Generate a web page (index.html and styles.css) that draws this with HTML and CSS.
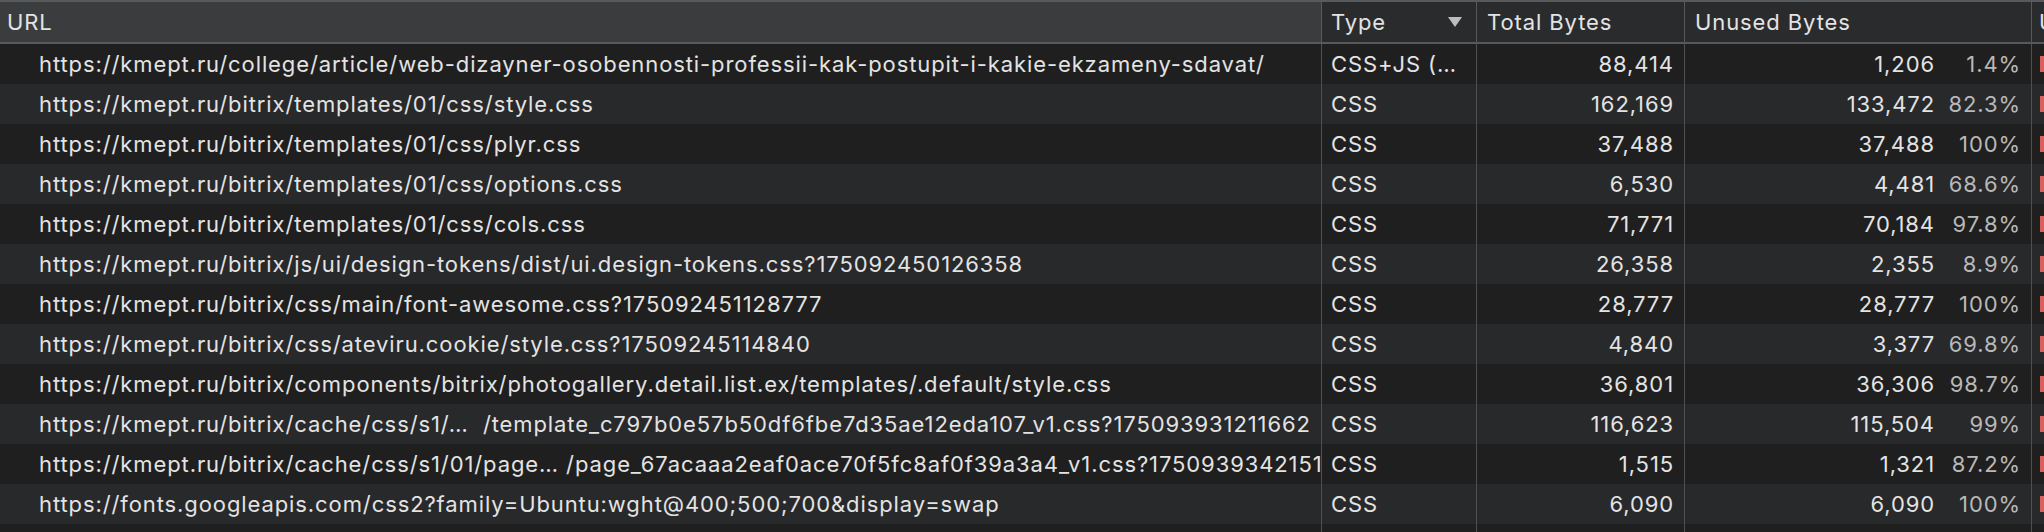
FILE: index.html
```html
<!DOCTYPE html>
<html>
<head>
<meta charset="utf-8">
<link rel="stylesheet" href="styles.css">
</head>
<body>
<div class="grid">
  <div class="row head">
    <div class="cell url sorted">URL</div>
    <div class="cell type">Type<span class="arrow"></span></div>
    <div class="cell">Total Bytes</div>
    <div class="cell">Unused Bytes</div>
    <div class="cell last">U</div>
  </div>
  <div class="row"><div class="cell url">https://kmept.ru/college/article/web-dizayner-osobennosti-professii-kak-postupit-i-kakie-ekzameny-sdavat/</div><div class="cell type">CSS+JS (…</div><div class="cell num">88,414</div><div class="cell unused"><span>1,206</span><span class="pct">1.4%</span></div><div class="cell last"><span class="bar"></span></div></div>
  <div class="row"><div class="cell url">https://kmept.ru/bitrix/templates/01/css/style.css</div><div class="cell type">CSS</div><div class="cell num">162,169</div><div class="cell unused"><span>133,472</span><span class="pct">82.3%</span></div><div class="cell last"><span class="bar"></span></div></div>
  <div class="row"><div class="cell url">https://kmept.ru/bitrix/templates/01/css/plyr.css</div><div class="cell type">CSS</div><div class="cell num">37,488</div><div class="cell unused"><span>37,488</span><span class="pct">100%</span></div><div class="cell last"><span class="bar"></span></div></div>
  <div class="row"><div class="cell url">https://kmept.ru/bitrix/templates/01/css/options.css</div><div class="cell type">CSS</div><div class="cell num">6,530</div><div class="cell unused"><span>4,481</span><span class="pct">68.6%</span></div><div class="cell last"><span class="bar"></span></div></div>
  <div class="row"><div class="cell url">https://kmept.ru/bitrix/templates/01/css/cols.css</div><div class="cell type">CSS</div><div class="cell num">71,771</div><div class="cell unused"><span>70,184</span><span class="pct">97.8%</span></div><div class="cell last"><span class="bar"></span></div></div>
  <div class="row"><div class="cell url">https://kmept.ru/bitrix/js/ui/design-tokens/dist/ui.design-tokens.css?175092450126358</div><div class="cell type">CSS</div><div class="cell num">26,358</div><div class="cell unused"><span>2,355</span><span class="pct">8.9%</span></div><div class="cell last"><span class="bar"></span></div></div>
  <div class="row"><div class="cell url">https://kmept.ru/bitrix/css/main/font-awesome.css?175092451128777</div><div class="cell type">CSS</div><div class="cell num">28,777</div><div class="cell unused"><span>28,777</span><span class="pct">100%</span></div><div class="cell last"><span class="bar"></span></div></div>
  <div class="row"><div class="cell url">https://kmept.ru/bitrix/css/ateviru.cookie/style.css?17509245114840</div><div class="cell type">CSS</div><div class="cell num">4,840</div><div class="cell unused"><span>3,377</span><span class="pct">69.8%</span></div><div class="cell last"><span class="bar"></span></div></div>
  <div class="row"><div class="cell url">https://kmept.ru/bitrix/components/bitrix/photogallery.detail.list.ex/templates/.default/style.css</div><div class="cell type">CSS</div><div class="cell num">36,801</div><div class="cell unused"><span>36,306</span><span class="pct">98.7%</span></div><div class="cell last"><span class="bar"></span></div></div>
  <div class="row"><div class="cell url">https://kmept.ru/bitrix/cache/css/s1/…  /template_c797b0e57b50df6fbe7d35ae12eda107_v1.css?175093931211662</div><div class="cell type">CSS</div><div class="cell num">116,623</div><div class="cell unused"><span>115,504</span><span class="pct">99%</span></div><div class="cell last"><span class="bar"></span></div></div>
  <div class="row"><div class="cell url">https://kmept.ru/bitrix/cache/css/s1/01/page… /page_67acaaa2eaf0ace70f5fc8af0f39a3a4_v1.css?17509393421515</div><div class="cell type">CSS</div><div class="cell num">1,515</div><div class="cell unused"><span>1,321</span><span class="pct">87.2%</span></div><div class="cell last"><span class="bar"></span></div></div>
  <div class="row"><div class="cell url">https://fonts.googleapis.com/css2?family=Ubuntu:wght@400;500;700&amp;display=swap</div><div class="cell type">CSS</div><div class="cell num">6,090</div><div class="cell unused"><span>6,090</span><span class="pct">100%</span></div><div class="cell last"><span class="bar"></span></div></div>
  <div class="row"><div class="cell url"></div><div class="cell type"></div><div class="cell num"></div><div class="cell unused"></div><div class="cell last"></div></div>
</div>
</body>
</html>
```
FILE: styles.css
```css
html, body {
  margin: 0;
  padding: 0;
  background: #1f1f1f;
  overflow: hidden;
}
body {
  font-family: Inter, "Noto Sans", sans-serif;
  font-size: 22px;
  letter-spacing: 0.9px;
  color: #e3e3e3;
}
.grid {
  width: 2044px;
  height: 532px;
  overflow: hidden;
}
.row {
  display: grid;
  grid-template-columns: 1321px 155px 208px 347px 1fr;
  height: 40px;
  background: #1f1f1f;
}
.row:nth-child(odd) {
  background: #28292b;
}
.row.head {
  height: 40px;
  background: #2a2b2d;
  border-top: 2px solid #58595b;
  border-bottom: 2px solid #58595b;
}
.cell {
  display: flex;
  align-items: center;
  white-space: pre;
  overflow: hidden;
  padding: 0 10px;
  border-left: 1px solid #505052;
  min-width: 0;
}
.cell:first-child {
  border-left: none;
}
.head .cell {
  border-left-color: #58595b;
}
.cell.url {
  padding-left: 39px;
  padding-right: 0;
}
.head .cell.url {
  padding-left: 7px;
}
.head .cell.sorted {
  background: #3b3c3e;
}
.cell.type {
  padding-left: 9px;
  justify-content: flex-start;
}
.head .cell.type {
  justify-content: space-between;
  padding-right: 14px;
}
.arrow {
  width: 0;
  height: 0;
  border-left: 7px solid transparent;
  border-right: 7px solid transparent;
  border-top: 10px solid #bdbdbd;
}
.cell.num {
  justify-content: flex-end;
}
.cell.unused {
  justify-content: flex-end;
}
.pct {
  display: inline-block;
  width: 86px;
  text-align: right;
  color: #b8b8b8;
}
.cell.last {
  padding: 0 0 0 8px;
}
.head .cell.last {
  padding-left: 7px;
}
.bar {
  display: block;
  width: 10px;
  height: 16px;
  background: #d5635b;
}
```
